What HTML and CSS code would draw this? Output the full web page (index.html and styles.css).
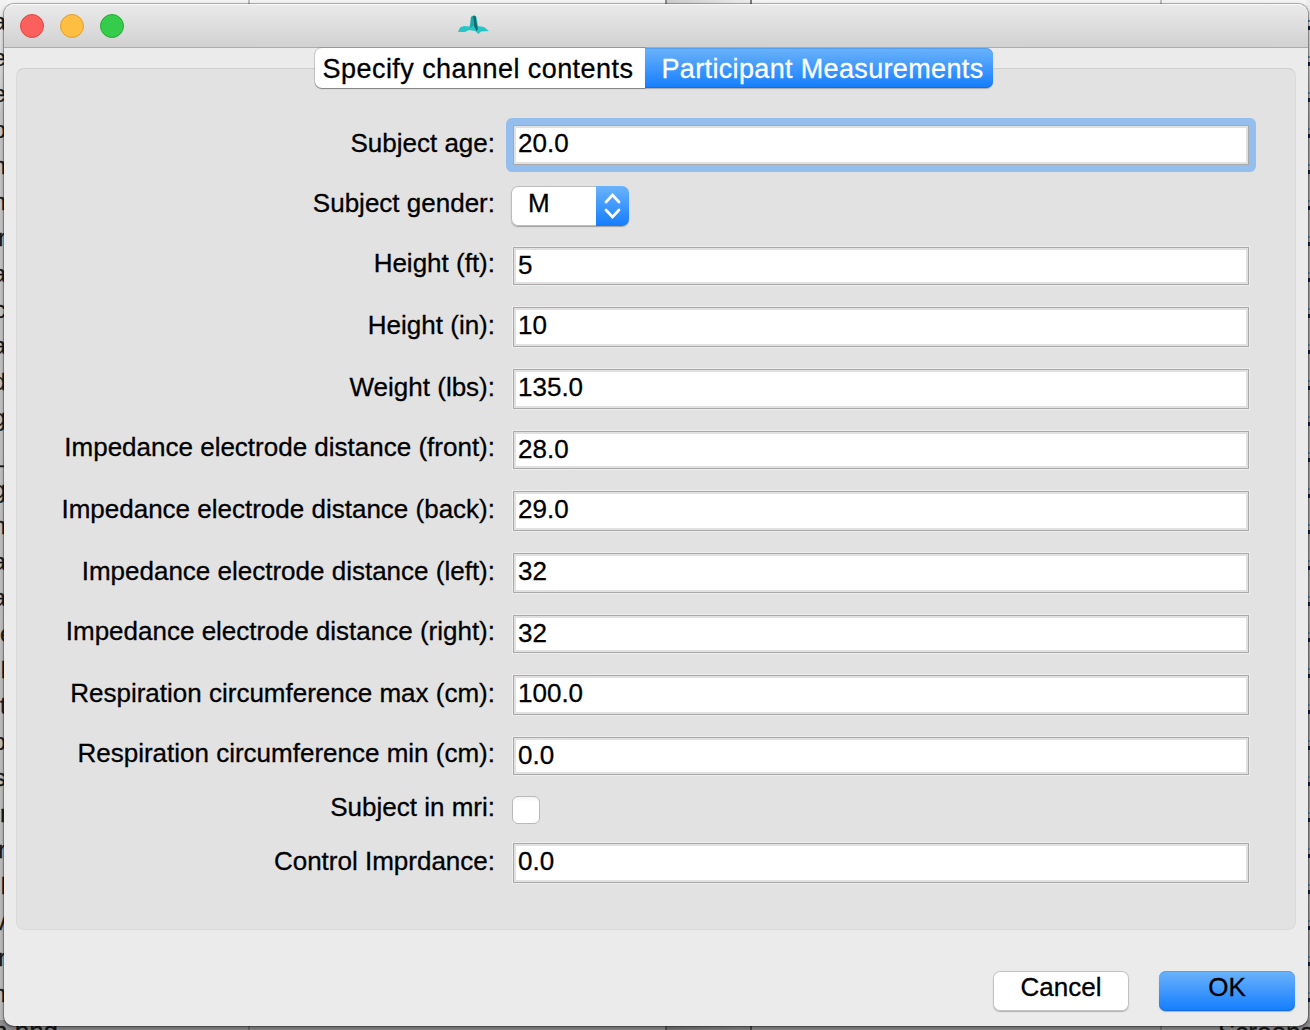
FILE: index.html
```html
<!DOCTYPE html>
<html lang="en">
<head>
<meta charset="utf-8">
<title>Participant Measurements</title>
<link rel="stylesheet" href="styles.css">
</head>
<body>
<div class="desktop">
  <div class="behind-top"><i class="rule r1"></i><i class="scroller"></i><i class="rule r2"></i></div>
  <div class="behind-left">
    <span>a</span><span>e</span><span>e</span><span>o</span><span>n</span><span>n</span><span>r</span><span>a</span><span>c</span><span>a</span><span>d</span><span>g</span><span>_</span><span>g</span><span>n</span><span>a</span><span>a</span><span class="cut">e</span><span>l</span><span class="cut">t</span><span>o</span><span>s</span><span class="cut">r</span><span>r</span><span>l</span><span>v</span><span>r</span><span>n</span>
  </div>
  <div class="behind-right"></div>
  <div class="behind-bottom"><span class="name-left">n.png</span><i class="rule r1"></i><i class="scroller"></i><i class="rule r2"></i><span class="name-right">Screens</span></div>

  <main class="window">
    <header class="titlebar">
      <div class="lights"><i class="light close"></i><i class="light minimize"></i><i class="light zoom"></i></div>
      <svg class="logo" width="34" height="22" viewBox="0 0 34 22">
        <path d="M1 19 L3 14.5 L7 13 L12 13.5 L13.5 11 L14 4 L17 2 L19.5 4 L21 13 L27 14 L32 18 L24 18.5 L21.5 21 L18 18 L12 17 L8 19 Z" fill="#26c6c6"/>
        <path d="M16 3 L18.5 3 L20 12 L21 16 L19.5 18 L17 13 Z" fill="#176a6c"/>
        <path d="M13.2 12 L14 4 L16 3 L16.5 12 L14 15 Z" fill="#1fa5a5"/>
      </svg>
    </header>
    <nav class="tabs"><button class="tab">Specify channel contents</button><button class="tab active">Participant Measurements</button></nav>
    <section class="panel">
      <div class="row"><label>Subject age:</label><div class="field focused">20.0</div></div>
      <div class="row select-row"><label>Subject gender:</label>
        <div class="select"><span>M</span><div class="stepper"><svg width="17" height="26" viewBox="0 0 17 26"><path d="M2 9 L8.5 2 L15 9 M2 17 L8.5 24 L15 17" fill="none" stroke="#fff" stroke-width="2.7" stroke-linecap="round" stroke-linejoin="miter"/></svg></div></div>
      </div>
      <div class="row short"><label>Height (ft):</label><div class="field">5</div></div>
      <div class="row"><label>Height (in):</label><div class="field">10</div></div>
      <div class="row"><label>Weight (lbs):</label><div class="field">135.0</div></div>
      <div class="row short"><label>Impedance electrode distance (front):</label><div class="field">28.0</div></div>
      <div class="row"><label>Impedance electrode distance (back):</label><div class="field">29.0</div></div>
      <div class="row"><label>Impedance electrode distance (left):</label><div class="field">32</div></div>
      <div class="row short"><label>Impedance electrode distance (right):</label><div class="field">32</div></div>
      <div class="row"><label>Respiration circumference max (cm):</label><div class="field">100.0</div></div>
      <div class="row short"><label>Respiration circumference min (cm):</label><div class="field">0.0</div></div>
      <div class="row check-row"><label>Subject in mri:</label><div class="checkbox"></div></div>
      <div class="row"><label>Control Imprdance:</label><div class="field">0.0</div></div>
    </section>
    <footer class="actions"><button class="button">Cancel</button><button class="button primary">OK</button></footer>
  </main>
</div>
</body>
</html>
```
FILE: styles.css
```css
* { box-sizing: border-box; }
body { margin: 0; font: 26px/36px "Liberation Sans", Arial, sans-serif; color: #000; -webkit-text-stroke: .3px; }
button { font: inherit; color: inherit; border: 0; padding: 0; margin: 0; white-space: nowrap; }

.desktop { position: relative; width: 1310px; height: 1030px; overflow: hidden; background: #c4c4c4; }

/* Slivers of the file browser that show round the dialog */
.behind-top { position: absolute; inset: 0 0 auto 0; height: 20px; background: #f4f4f4; }
.behind-bottom { position: absolute; inset: 1020px 0 0 0; background: #8f8f8f; overflow: hidden; }
.rule { position: absolute; top: 0; bottom: 0; width: 2px; background: rgba(0, 0, 0, .22); }
.r1 { left: 248px; }
.r2 { left: 1160px; }
.scroller { position: absolute; top: 0; bottom: 0; left: 665px; width: 87px; border: solid rgba(0, 0, 0, .4); border-width: 0 2px; background: linear-gradient(90deg, rgba(0, 0, 0, .16), rgba(0, 0, 0, .03)); }
.name-left, .name-right { position: absolute; color: #161616; line-height: 30px; }
.name-left { left: -7px; top: -4px; }
.name-right { left: 1218px; top: -3px; }
.behind-left { position: absolute; left: 0; top: 0; width: 6px; height: 1026px; padding-top: 4px; overflow: hidden; display: flex; flex-direction: column; align-items: flex-end; background: linear-gradient(#f2f2f2, #c8c8c8 120px, #bebebe); color: #1b1b1b; font-size: 24px; }
.behind-left span { flex: 0 0 36px; width: 14px; text-align: right; }
.behind-left .cut { transform: translateX(8px); text-align: left; }
.behind-right { position: absolute; right: 0; top: 0; width: 4px; height: 1026px; background: repeating-linear-gradient(transparent 0 20px, #4d8dbc 20px 22px, transparent 22px 26px, #15204c 26px 30px, transparent 30px 36px), linear-gradient(#eee, #aaa 120px, #a2a2a2); }

.window { position: absolute; left: 4px; top: 4px; width: 1304px; height: 1022px; background: #ebebeb; border-radius: 10px; box-shadow: 0 0 0 1px rgba(0, 0, 0, .25), 0 2px 5px rgba(0, 0, 0, .4); display: flex; flex-direction: column; }
.titlebar { height: 44px; flex: none; display: flex; align-items: center; border-radius: 10px 10px 0 0; border-top: 1px solid #f7f7f7; border-bottom: 1px solid #acacac; background: linear-gradient(#eaeaea, #d1d1d1); }
.lights { display: flex; gap: 16px; padding-left: 16px; }
.light { width: 24px; height: 24px; border-radius: 50%; border: 1px solid; }
.close { background: #fc605c; border-color: #df4744; }
.minimize { background: #fdbe41; border-color: #dfa033; }
.zoom { background: #35cb4b; border-color: #24ac32; }
.logo { margin: 0 0 4px 333px; }

.tabs { position: relative; z-index: 1; display: flex; justify-content: center; height: 40px; flex: none; padding-right: 4px; margin-bottom: -20px; font-size: 27px; }
.tab { height: 40px; line-height: 42px; background: #fff; width: 330px; padding-right: 4px; border-radius: 7px 0 0 7px; box-shadow: 0 1px 1px rgba(0, 0, 0, .35), 0 0 0 1px rgba(0, 0, 0, .12); letter-spacing: .44px; }
.tab.active { width: 348px; border-radius: 0 7px 7px 0; background: linear-gradient(#6bb3fa, #147dff); color: #fff; padding: 0 0 0 7px; letter-spacing: .35px; box-shadow: inset 0 1px #51a0f3, inset 0 -1px #126ded, 0 1px 1px rgba(0, 0, 0, .25); }

.panel { flex: none; height: 862px; margin: 0 12px; padding: 56px 46px 0 0; display: flex; flex-direction: column; gap: 22px; background: #e2e2e2; border: 1px solid #dadada; border-top-color: #cfcfcf; border-radius: 8px; }
.row { flex: none; display: flex; height: 40px; }
.row.short { height: 38px; }
.row label { flex: none; width: 478px; margin-right: 18px; text-align: right; line-height: 36px; white-space: nowrap; }
.short label { transform: translateY(-2px); }
.field { flex: none; width: 736px; height: 100%; padding-left: 4px; line-height: 35px; background: #fff; border: 1px solid #aaa; box-shadow: inset 0 0 0 2px #e1e1e1, 0 0 0 1px #ededed; }
.focused { position: relative; box-shadow: inset 0 0 0 2px #e1e1e1; }
.focused::after { content: ""; position: absolute; inset: -8px; border: 7px solid #93beee; border-radius: 6px; }
.select-row { margin: -1px 0; }
.select-row label { line-height: 35px; }
.select { margin-left: -2px; width: 118px; display: flex; background: #fff; border-radius: 7px; box-shadow: 0 1px 1px rgba(0, 0, 0, .3), inset 0 0 0 1px #bcbcbc; }
.select span { width: 85px; padding-left: 17px; line-height: 35px; }
.stepper { width: 33px; border-radius: 0 7px 7px 0; background: linear-gradient(#6bb3fa, #147dff); display: flex; align-items: center; justify-content: center; }
.check-row { height: 28px; margin: -1px 0 -3px; }
.check-row label { line-height: 23px; }
.checkbox { width: 28px; height: 28px; margin-left: -1px; border: 1px solid #b9b9b9; border-radius: 6px; background: linear-gradient(#f4f4f4, #fff 5px); }

.actions { display: flex; justify-content: flex-end; gap: 30px; padding: 41px 13px 0 0; }
.button { width: 136px; height: 40px; line-height: 33px; padding-bottom: 7px; border-radius: 7px; background: #fff; box-shadow: inset 0 0 0 1px #c2c2c2, 0 1px 1px rgba(0, 0, 0, .25); }
.button.primary { background: linear-gradient(#6bb3fa, #147dff); box-shadow: inset 0 1px #51a0f3, inset 0 -1px #126ded, 0 1px 1px rgba(0, 0, 0, .25); }
```
